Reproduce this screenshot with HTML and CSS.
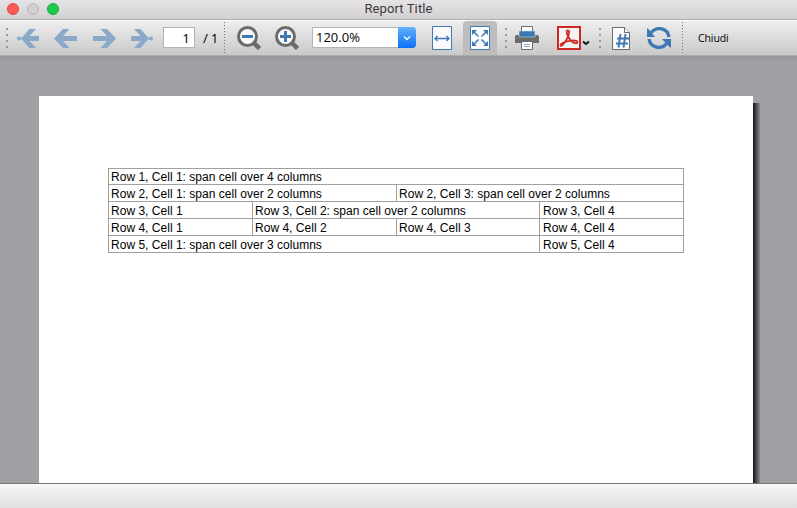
FILE: index.html
```html
<!DOCTYPE html>
<html lang="en">
<head>
<meta charset="utf-8">
<title>Report Title</title>
<link rel="stylesheet" href="styles.css">
</head>
<body>
<div class="window">
  <header class="titlebar">
    <div class="lights"><i class="light close"></i><i class="light minimize"></i><i class="light maximize"></i></div>
    <h1>Report Title</h1>
  </header>
  <nav class="toolbar">
    <span class="grip"><i></i><i></i><i></i><i></i></span>
    <svg class="icon first" width="24" height="24" viewBox="0 0 24 24"><g fill="#8aa9c9"><path d="M5 12.5 13.5 3H20l-6.500 7H23v5h-9.500L20 22h-6.500z"/><circle cx="3" cy="12.500" r="2"/><path d="M3 12h4v1H3z"/></g></svg>
    <svg class="icon prev" width="24" height="24" viewBox="0 0 24 24"><path fill="#8aa9c9" d="M0 12.500 9 3h6.500L9 10h14v5H9l6.500 7H9z"/></svg>
    <svg class="icon next" width="24" height="24" viewBox="0 0 24 24"><path fill="#8aa9c9" d="M23 12.500 14 3H7.500L14 10H0v5h14l-6.500 7H14z"/></svg>
    <svg class="icon last" width="24" height="24" viewBox="0 0 24 24"><g fill="#8aa9c9"><path d="M18 12.500 9.500 3H3l6.500 7H0v5h9.500L3 22h6.500z"/><circle cx="20" cy="12.500" r="2"/><path d="M16 12h4v1h-4z"/></g></svg>
    <span class="page-input">1</span>
    <span class="page-total">/ 1</span>
    <span class="divider"></span>
    <svg class="icon zoom-out" width="24" height="24" viewBox="0 0 24 24"><circle cx="10.500" cy="10.500" r="9" fill="#f9f9f9" stroke="#6b6b6b" stroke-width="3"/><path d="m16.500 16.500 6 6" stroke="#6b6b6b" stroke-width="4.500"/><path fill="#3d78b4" d="M5 9h11v3H5z"/></svg>
    <svg class="icon zoom-in" width="24" height="24" viewBox="0 0 24 24"><circle cx="10.500" cy="10.500" r="9" fill="#f9f9f9" stroke="#6b6b6b" stroke-width="3"/><path d="m16.500 16.500 6 6" stroke="#6b6b6b" stroke-width="4.500"/><path fill="#3d78b4" d="M5 9h4V5h3v4h4v3h-4v4H9v-4H5z"/></svg>
    <div class="select"><span>120.0%</span><b><svg width="8" height="6" viewBox="0 0 8 6"><path d="m1 1.500 3 3 3-3" fill="none" stroke="#fff" stroke-width="1.300"/></svg></b></div>
    <svg class="icon fit-width" width="20" height="24" viewBox="0 0 20 24"><path d="M.5.5h19v23H.5z" fill="#fafafa" stroke="#3d78b4"/><path d="M3 12.500h14M5.500 10 3 12.500 5.500 15M14.500 10l2.500 2.500-2.500 2.500" fill="none" stroke="#3d78b4" stroke-width="1.300"/></svg>
    <span class="active"><svg width="20" height="24" viewBox="0 0 20 24"><path d="M.5.5h19v23H.5z" fill="#fafafa" stroke="#3d78b4"/><g fill="#3d78b4"><path d="M2 4h5L2 9zM18 4v5l-5-5zM2 20v-5l5 5zM18 20h-5l5-5z"/></g><path d="m4 6 4.500 4.500M16 6l-4.500 4.500M4 18l4.500-4.500M16 18l-4.500-4.500" stroke="#3d78b4" stroke-width="1.500"/></svg></span>
    <span class="grip second"><i></i><i></i><i></i><i></i></span>
    <svg class="icon printer" width="24" height="24" viewBox="0 0 24 24"><path d="M6.500.5h11v7h-11z" fill="#fff" stroke="#6b6b6b"/><path fill="#6b6b6b" d="M2 9h20q2 0 2 2v6H0v-6q0-2 2-2z"/><path fill="#3d78b4" stroke="#dedede" stroke-width=".5" d="M4 5h16v6H4z"/><path d="M6.500 15.500h11v8h-11z" fill="#fff" stroke="#6b6b6b"/><path stroke="#8ca9cc" d="M9 18.500h6M9 20.500h6"/></svg>
    <svg class="icon pdf" width="24" height="24" viewBox="0 0 24 24"><path d="M1 1h22v22H1z" fill="#f4f4f2" stroke="#cf2925" stroke-width="2"/><path d="M11 4.300c-1.700-.2-1.700 2.200-.3 5.300 1.800 3.800 4.700 7.400 7.900 7.700 2.200.2 2.400-1.700.6-2.400-3.300-1.200-9.700.2-13.600 2.100-2.800 1.400-2.500 3.700-.8 2.500 2.700-1.900 6.200-7.400 7.100-11.700.4-2 .2-3.500-.9-3.500z" fill="none" stroke="#cf2925" stroke-width="1.800"/></svg>
    <svg class="icon chevron" width="8" height="6" viewBox="0 0 8 6"><path d="m1 1.500 3 2.500 3-2.500" fill="none" stroke="#111" stroke-width="1.800"/></svg>
    <span class="grip third"><i></i><i></i><i></i><i></i></span>
    <svg class="icon numbers" width="18" height="24" viewBox="0 0 18 24"><path d="M.5 1.500h12l5 5v17H.5z" fill="#fafafa" stroke="#6b6b6b"/><path d="M12.500 1.500v5h5" fill="#fff" stroke="#6b6b6b"/><path d="m8.500 8-2 13.500M13.500 8l-2 13.500M5 12.500h12M4 17.500h12" stroke="#3d78b4" stroke-width="1.900"/></svg>
    <svg class="icon refresh" width="24" height="24" viewBox="0 0 24 24"><g fill="none" stroke="#3d78b4" stroke-width="3.300"><path d="M4.500 6.500A9.800 9.800 0 0 1 22 11"/><path d="M19.500 17.500A9.800 9.800 0 0 1 2 13"/></g><path fill="#3d78b4" d="M0 2l3 2.500L8 11H0zM24 22l-3-2.500L15 13h9z"/></svg>
    <span class="divider end"></span>
    <span class="close-label">Chiudi</span>
  </nav>
  <main class="viewer">
    <section class="page">
      <div class="report">
        <div class="cell span4">Row 1, Cell 1: span cell over 4 columns</div>
        <div class="cell span2">Row 2, Cell 1: span cell over 2 columns</div>
        <div class="cell span2">Row 2, Cell 3: span cell over 2 columns</div>
        <div class="cell">Row 3, Cell 1</div>
        <div class="cell span2">Row 3, Cell 2: span cell over 2 columns</div>
        <div class="cell last-column">Row 3, Cell 4</div>
        <div class="cell">Row 4, Cell 1</div>
        <div class="cell">Row 4, Cell 2</div>
        <div class="cell">Row 4, Cell 3</div>
        <div class="cell last-column">Row 4, Cell 4</div>
        <div class="cell span3">Row 5, Cell 1: span cell over 3 columns</div>
        <div class="cell last-column">Row 5, Cell 4</div>
      </div>
    </section>
    <div class="shadow"></div>
  </main>
  <footer class="statusbar"></footer>
</div>
</body>
</html>
```
FILE: styles.css
```css
* { box-sizing: border-box; }
body { margin: 0; font-family: "Liberation Sans", Arial, sans-serif; color: #000; }
.window { width: 797px; height: 508px; display: flex; flex-direction: column; overflow: hidden; }
.titlebar { height: 20px; flex: none; display: grid; grid-template-columns: 60px 1fr 60px; background: linear-gradient(#e6e3e6, #d3d0d3); border-bottom: 1px solid #b2afb2; }
.lights { display: flex; gap: 8px; padding: 3px 0 0 7px; }
.light { width: 12px; height: 12px; border-radius: 50%; border: 1px solid; flex: none; }
.close { background: #fc5b57; border-color: #e2443f; }
.minimize { background: #d0ced0; border-color: #b8b6b8; }
.maximize { background: #1dcb4c; border-color: #14ad38; }
h1 { margin: 0; text-align: center; font: 13px/18px Roboto, sans-serif; color: #3c3a3c; letter-spacing: .1px; }
.toolbar { height: 36px; flex: none; display: flex; align-items: flex-start; background: linear-gradient(#eeeeee, #c9c9c9); border-top: 1px solid #fafafa; border-bottom: 1px solid #aaa; }
.toolbar > * { flex: none; }
.icon { display: block; margin-top: 5px; }
.grip { width: 2px; margin: 7px 0 0 6px; display: flex; flex-direction: column; gap: 4px; }
.grip i { width: 2px; height: 2px; background: #999; }
.first { margin-left: 8px; }
.prev { margin-left: 14px; }
.next { margin-left: 15px; }
.last { margin-left: 14px; }
.page-input { width: 32px; height: 21px; margin: 6px 0 0 8px; padding-right: 4px; border: 1px solid #b4b4b4; background: #fff; font: 13.5px/20px "Open Sans", sans-serif; text-align: right; }
.page-total { width: 21px; margin: 7px 0 0 8px; font: 13.5px/20px "Open Sans", sans-serif; letter-spacing: -.4px; white-space: nowrap; }
.divider { width: 1px; height: 31px; margin-top: 1px; background: repeating-linear-gradient(#777 0 1px, transparent 1px 3px); }
.zoom-out { margin-left: 12px; }
.zoom-in { margin-left: 14px; }
.select { width: 104px; height: 21px; margin: 6px 0 0 13px; display: flex; background: #fff; border: 1px solid #b4b4b4; border-right: 0; border-radius: 0 4px 4px 0; }
.select span { flex: 1; padding-left: 3px; font: 13px/19px "Open Sans", sans-serif; }
.select b { width: 18px; margin: -1px 0; display: grid; place-items: center; border-radius: 0 4px 4px 0; background: linear-gradient(#65b1fb, #0a70f6); }
.fit-width { margin-left: 16px; }
.active { width: 34px; height: 34px; margin-left: 11px; padding: 5px 7px; border-radius: 4px 4px 0 0; background: #bdbdbd; }
.active svg { display: block; }
.second { margin-left: 8px; }
.printer { margin-left: 8px; }
.pdf { margin-left: 18px; }
.chevron { margin: 19px 0 0 1px; }
.third { margin-left: 9px; }
.numbers { margin-left: 11px; }
.refresh { margin-left: 17px; }
.end { margin-left: 11px; }
.close-label { margin: 9px 0 0 15px; font: 10.5px/16px "Open Sans", sans-serif; letter-spacing: -.1px; }
.viewer { flex: 1; min-height: 0; display: flex; padding: 40px 0 0 39px; background: linear-gradient(#96959a, #a09fa4 5px); }
.page { width: 714px; padding: 72px 0 0 69px; background: #fff; }
.report { width: 576px; display: grid; grid-template-columns: 144px 144px 143px 144px; grid-template-rows: 16px repeat(4, 17px); border: solid #a0a0a0; border-width: 1px 0 0 1px; }
.cell { padding-left: 2px; border: solid #a0a0a0; border-width: 0 1px 1px 0; font-size: 12px; line-height: 19px; letter-spacing: .02px; white-space: nowrap; }
.last-column { padding-left: 3px; }
.span2 { grid-column: span 2; }
.span3 { grid-column: span 3; }
.span4 { grid-column: span 4; line-height: 17px; }
.shadow { width: 7px; margin-top: 7px; background: linear-gradient(90deg, #111, #8d8c90); }
.statusbar { height: 25px; flex: none; border-top: 1px solid #777; background: linear-gradient(#f7f7f7, #dfdfdf); }
```
